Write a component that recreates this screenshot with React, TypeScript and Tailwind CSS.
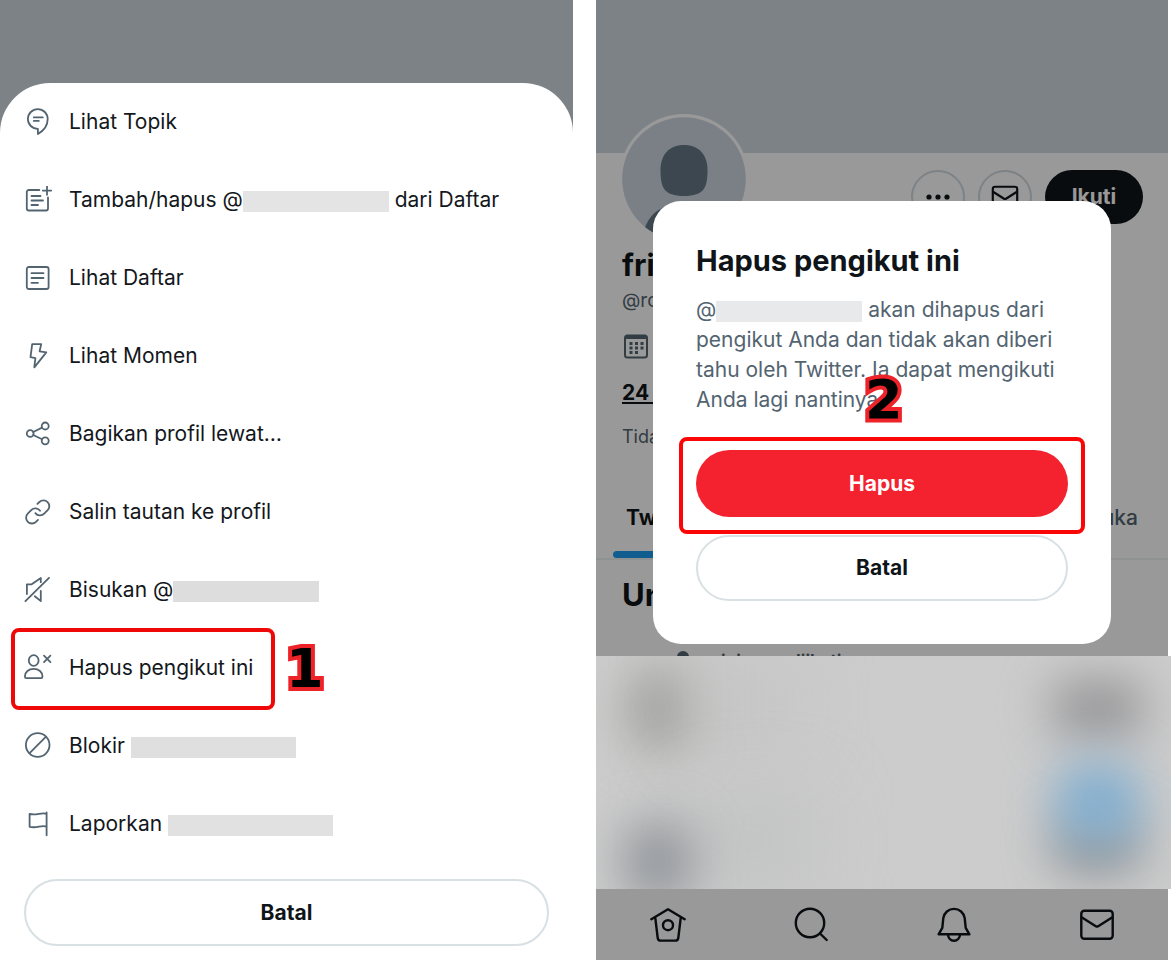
import type { ReactNode } from "react";

function Icon({ children, large = false }: { children: ReactNode; large?: boolean }) {
  return (
    <svg
      aria-hidden="true"
      viewBox={large ? "0 0 36 36" : "0 0 28 28"}
      className={large ? "size-9 shrink-0" : "size-7 shrink-0"}
      fill="none"
      stroke="currentColor"
      strokeWidth={large ? 2.4 : 1.8}
      strokeLinecap="round"
      strokeLinejoin="round"
    >
      {children}
    </svg>
  );
}

const icons = {
  topic: (
    <>
      <path d="M13.9 20.8V26c5.6-3.2 9.8-8.6 9.8-15A9.9 9.9 0 1 0 3.9 11c0 5.6 4.400 9.800 10 9.800z" />
      <path d="M9.800 9.400h9M9.800 12.900h5" />
    </>
  ),
  listAdd: (
    <>
      <path d="M15.300 4H4.800a2 2 0 0 0-2 2v16.500a2 2 0 0 0 2 2H22a2 2 0 0 0 2-2V11.500" />
      <path d="M7.500 10h9M7.500 14.500h11.500M7.500 19h6.500M23 .5v8.300M18.800 4.600h8.400" />
    </>
  ),
  list: (
    <>
      <rect x="2.800" y="3" width="21.800" height="22" rx="2" />
      <path d="M7.500 9.200h12M7.500 14h12M7.500 18.800h6.500" />
    </>
  ),
  bolt: <path d="M8.200 2.100h9l-1.600 7.200 6.700 1.100-12 15 1.100-9.200-4.900-1.100z" />,
  share: (
    <>
      <circle cx="6.200" cy="13.500" r="3.400" />
      <circle cx="21.200" cy="6" r="3.500" />
      <circle cx="21.200" cy="20.800" r="3.500" />
      <path d="M9.200 12l8.900-4.400M9.200 15l8.900 4.300" />
    </>
  ),
  link: (
    <g transform="translate(-0.300 -1) scale(1.1667)" strokeWidth="1.550">
      <path d="M10 13a5 5 0 0 0 7.540.540l3-3a5 5 0 0 0-7.070-7.070l-1.720 1.710" transform="translate(0 0.800)" />
      <path d="M14 11a5 5 0 0 0-7.540-.540l-3 3a5 5 0 0 0 7.070 7.070l1.710-1.710" transform="translate(0 0.800)" />
    </g>
  ),
  mute: <path d="M2.900 18V8.300h4.800l9.100-6.300v4.200M10.800 20.200l6 4.900V14.800M1.400 25.200L25 1.800" />,
  removeUser: (
    <>
      <ellipse cx="9.700" cy="6.500" rx="4.900" ry="5.300" />
      <path d="M.9 22.500c0-4.700 3.800-7.600 8.800-7.600s8.800 2.900 8.800 7.600c0 1-.5 1.600-1.400 1.600H2.300c-.9 0-1.400-.6-1.400-1.600zM20 1.700l6.400 6.400M26.400 1.700L20 8.100" />
    </>
  ),
  block: (
    <>
      <circle cx="13.700" cy="13" r="11.800" />
      <path d="M5.600 21.200L21.800 4.800" />
    </>
  ),
  flag: <path d="M22.600 2.500v22.800M22.600 3.800c-5.800-1.700-9.500 2-17 .2v12.800c7.500 1.800 11.200-1.900 17-.2" />,
  home: (
    <>
      <path d="M1.300 13.200L18 3.200l16.700 10M5.200 11.200L7.700 32a3 3 0 0 0 3 2.600h14.600a3 3 0 0 0 3-2.600l2.500-20.800" />
      <circle cx="18" cy="19.200" r="5" />
    </>
  ),
  search: (
    <>
      <circle cx="17" cy="17" r="14.200" />
      <path d="M27 27.500l6.700 6.500" />
    </>
  ),
  bell: <path d="M2.600 28.300h30.800l-3.700-6.500-1-9.600a10.800 10.800 0 0 0-21.400 0l-1 9.600zM12 28.500a6 6.300 0 0 0 12 0" />,
  mail: (
    <>
      <rect x="2.300" y="4.800" width="31.400" height="28" rx="3" />
      <path d="M2.600 11.200l14.200 9a2.400 2.400 0 0 0 2.400 0l14.200-9" />
    </>
  ),
};

function Mask({ className }: { className: string }) {
  return <span className={`inline-block h-[21px] align-middle ${className}`} />;
}

function Step({ children, className }: { children: ReactNode; className: string }) {
  return (
    <span
      className={`absolute font-['DejaVu_Sans'] text-[54px] leading-none font-bold text-black [-webkit-text-stroke:8px_#ee2229] [paint-order:stroke_fill] ${className}`}
    >
      {children}
    </span>
  );
}

const items: { icon: ReactNode; label: ReactNode; marked?: boolean }[] = [
  { icon: icons.topic, label: "Lihat Topik" },
  {
    icon: icons.listAdd,
    label: (
      <>
        Tambah/hapus @<Mask className="w-[146px] bg-[#e4e4e4]" /> dari Daftar
      </>
    ),
  },
  { icon: icons.list, label: "Lihat Daftar" },
  { icon: icons.bolt, label: "Lihat Momen" },
  { icon: icons.share, label: "Bagikan profil lewat…" },
  { icon: icons.link, label: "Salin tautan ke profil" },
  { icon: icons.mute, label: <>Bisukan @<Mask className="w-[146px] bg-[#dddddd]" /></> },
  { icon: icons.removeUser, label: "Hapus pengikut ini", marked: true },
  { icon: icons.block, label: <>Blokir <Mask className="w-[165px] bg-[#dfdfdf]" /></> },
  { icon: icons.flag, label: <>Laporkan <Mask className="w-[165px] bg-[#e1e1e1]" /></> },
];

function ActionSheet() {
  return (
    <section className="flex flex-col bg-[#7c8286] pt-[83px]">
      <div className="grow rounded-t-[50px] bg-white">
        <ul>
          {items.map((item, i) => (
            <li key={i} className="relative">
              <button className="flex h-[78px] w-full items-center gap-[17px] px-6 text-left text-[21px] whitespace-nowrap text-[#14181c]">
                <span className="text-[#536471]">
                  <Icon>{item.icon}</Icon>
                </span>
                <span>{item.label}</span>
              </button>
              {item.marked && (
                <div className="pointer-events-none absolute -top-px -bottom-[3px] left-[11px] w-[264px] rounded-lg border-4 border-[#ee0808]">
                  <Step className="top-[10px] left-[271px]">1</Step>
                </div>
              )}
            </li>
          ))}
        </ul>
        <div className="px-6 py-4">
          <button className="h-[67px] w-full rounded-full border-2 border-[#d8e0e3] text-[21px] font-bold text-[#0f1419]">
            Batal
          </button>
        </div>
      </div>
    </section>
  );
}

function Avatar() {
  return (
    <svg aria-hidden="true" viewBox="0 0 130 130" className="-mt-[39px] -mb-[5px] -ml-[3px] size-[130px]">
      <circle cx="65" cy="65" r="65" fill="#fff" />
      <clipPath id="avatar-clip">
        <circle cx="65" cy="65" r="61.800" />
      </clipPath>
      <g clipPath="url(#avatar-clip)">
        <rect width="130" height="130" fill="#ccd6e0" />
        <path
          d="M65 31c15 0 23.500 10 23.500 25 0 17-3 26-23.500 26s-23.500-9-23.500-26c0-15 8.500-25 23.500-25z"
          fill="#657786"
        />
        <path d="M23 125c4-24 17-35 42-35s38 11 42 35z" fill="#657786" />
      </g>
    </svg>
  );
}

function Profile() {
  return (
    <div className="mr-[3px] bg-white">
      <div className="h-[153px] bg-[#cfd9de]" />
      <div className="pr-[25px] pl-[26px]">
        <div className="flex items-start justify-between">
          <Avatar />
          <div className="flex gap-[13px] pt-[17px]">
            <button aria-label="Lainnya" className="flex size-[54px] items-center justify-center rounded-full border-2 border-[#cfd9de] text-[#0f1419]">
              <svg aria-hidden="true" viewBox="0 0 24 6" className="w-6" fill="currentColor">
                <circle cx="3" cy="3" r="2.600" />
                <circle cx="12" cy="3" r="2.600" />
                <circle cx="21" cy="3" r="2.600" />
              </svg>
            </button>
            <button aria-label="Kirim pesan" className="flex size-[54px] items-center justify-center rounded-full border-2 border-[#cfd9de] text-[#0f1419]">
              <svg aria-hidden="true" viewBox="0 0 36 36" className="size-7" fill="none" stroke="currentColor" strokeWidth="2.800" strokeLinejoin="round">
                {icons.mail}
              </svg>
            </button>
            <button className="h-[54px] w-[98px] rounded-full bg-[#0f1419] text-[21px] font-bold text-white">
              Ikuti
            </button>
          </div>
        </div>
        <h1 className="mt-2 text-[30px] leading-9 font-bold text-[#0f1419]">fri</h1>
        <p className="mt-[5px] text-[19px] leading-[26px] text-[#536471]">@ro</p>
        <svg aria-hidden="true" viewBox="0 0 28 28" className="mt-[18px] size-7" fill="none" stroke="#536471" strokeWidth="2">
          <rect x="3" y="3.500" width="22" height="22" rx="2.500" />
          <path d="M3 5.500h22" strokeWidth="3" />
          <path d="M7.500 11.500h14M7.500 16h14M7.500 20.500h9" strokeWidth="3" strokeDasharray="3 2.500" />
        </svg>
        <p className="mt-[19px] text-[21px] leading-7 font-bold text-[#0f1419] underline">24 Mengikuti</p>
        <p className="mt-[17px] text-[18px] leading-[26px] text-[#536471]">Tidak</p>
      </div>
      <nav className="mt-7 flex h-[82px] justify-between border-b-2 border-[#eff3f4] pr-[30px] pl-[17px] text-[21px]">
        <a href="#tweet" className="relative flex items-center px-[13px] font-bold text-[#0f1419]">
          Tweet
          <span className="absolute inset-x-0 bottom-0 h-[7px] rounded-full bg-[#1d9bf0]" />
        </a>
        <a href="#suka" className="flex items-center font-medium text-[#536471]">
          Suka
        </a>
      </nav>
      <h2 className="mt-4 px-[26px] text-[31px] leading-[38px] font-bold text-[#0f1419]">Untuk</h2>
      <div className="mt-[35px] flex h-[7px] items-start gap-[31px] overflow-hidden pl-20 text-[17px] leading-6 font-bold text-[#536471]">
        <svg aria-hidden="true" viewBox="0 0 14 14" className="mt-[2px] size-[14px] shrink-0" fill="#536471">
          <circle cx="7" cy="6" r="6" />
        </svg>
        <span>ini yang diikuti</span>
      </div>
    </div>
  );
}

function BlurredFeed() {
  return (
    <div className="relative z-10 h-[233px] overflow-hidden bg-[#cccccc]">
      <div className="absolute top-3 left-[32px] h-[82px] w-[66px] rounded-3xl bg-[#a1a29e] blur-xl" />
      <div className="absolute top-[10px] left-[100px] h-[75px] w-[90px] bg-[#c2c2c2] blur-2xl" />
      <div className="absolute top-[148px] left-[100px] h-[75px] w-[110px] bg-[#bfc0c0] blur-2xl" />
      <div className="absolute top-[166px] left-[28px] h-[80px] w-[68px] rounded-3xl bg-[#92969b] blur-xl" />
      <div className="absolute top-[24px] right-[28px] h-[56px] w-[90px] rounded-2xl bg-[#949496] blur-xl" />
      <div className="absolute top-[164px] right-[32px] h-[52px] w-[84px] rounded-2xl bg-[#8c9093] blur-xl" />
      <div className="absolute top-[108px] right-[32px] h-[78px] w-[82px] rounded-3xl bg-[#80aed0] blur-xl" />
    </div>
  );
}

function ConfirmDialog() {
  return (
    <div role="dialog" aria-labelledby="confirm-title" className="w-full rounded-[28px] bg-white px-[43px] pt-10 pb-[43px]">
      <h2 id="confirm-title" className="text-[29px] leading-10 font-bold text-[#0f1419]">
        Hapus pengikut ini
      </h2>
      <p className="mt-[14px] text-[21px] leading-[30px] whitespace-nowrap text-[#536471]">
        @<Mask className="w-[146px] bg-[#e7e9ea]" /> akan dihapus dari
        <br />
        pengikut Anda dan tidak akan diberi
        <br />
        tahu oleh Twitter. Ia dapat mengikuti
        <br />
        Anda lagi nantinya.
      </p>
      <div className="relative mt-[35px]">
        <button className="h-[67px] w-full rounded-full bg-[#f4212e] text-[21px] font-bold text-white">Hapus</button>
        <div className="pointer-events-none absolute -inset-x-[17px] -top-[13px] -bottom-[17px] rounded-lg border-4 border-[#fa0606]">
          <Step className="-top-[68px] left-[182px]">2</Step>
        </div>
      </div>
      <button className="mt-[18px] h-[66px] w-full rounded-full border-2 border-[#d8e0e3] text-[21px] font-bold text-[#0f1419]">
        Batal
      </button>
    </div>
  );
}

const tabs = [
  { name: "Beranda", icon: icons.home },
  { name: "Cari", icon: icons.search },
  { name: "Notifikasi", icon: icons.bell },
  { name: "Pesan", icon: icons.mail },
];

function ProfileScreen() {
  return (
    <section className="relative flex flex-col">
      <Profile />
      <BlurredFeed />
      <nav className="mr-[3px] grid min-h-[71px] grow grid-cols-4 items-center bg-white pb-1 text-[#0f1419]">
        {tabs.map((tab) => (
          <a key={tab.name} href={`#${tab.name}`} aria-label={tab.name} className="flex justify-center">
            <Icon large>{tab.icon}</Icon>
          </a>
        ))}
      </nav>
      <div className="absolute inset-y-0 right-[3px] left-0 bg-black/40 px-[57px] pt-[201px]">
        <ConfirmDialog />
      </div>
    </section>
  );
}

export default function App() {
  return (
    <main className="grid min-h-screen grid-cols-[573fr_575fr] gap-[23px] bg-white font-['Inter','Liberation_Sans',sans-serif]">
      <ActionSheet />
      <ProfileScreen />
    </main>
  );
}
